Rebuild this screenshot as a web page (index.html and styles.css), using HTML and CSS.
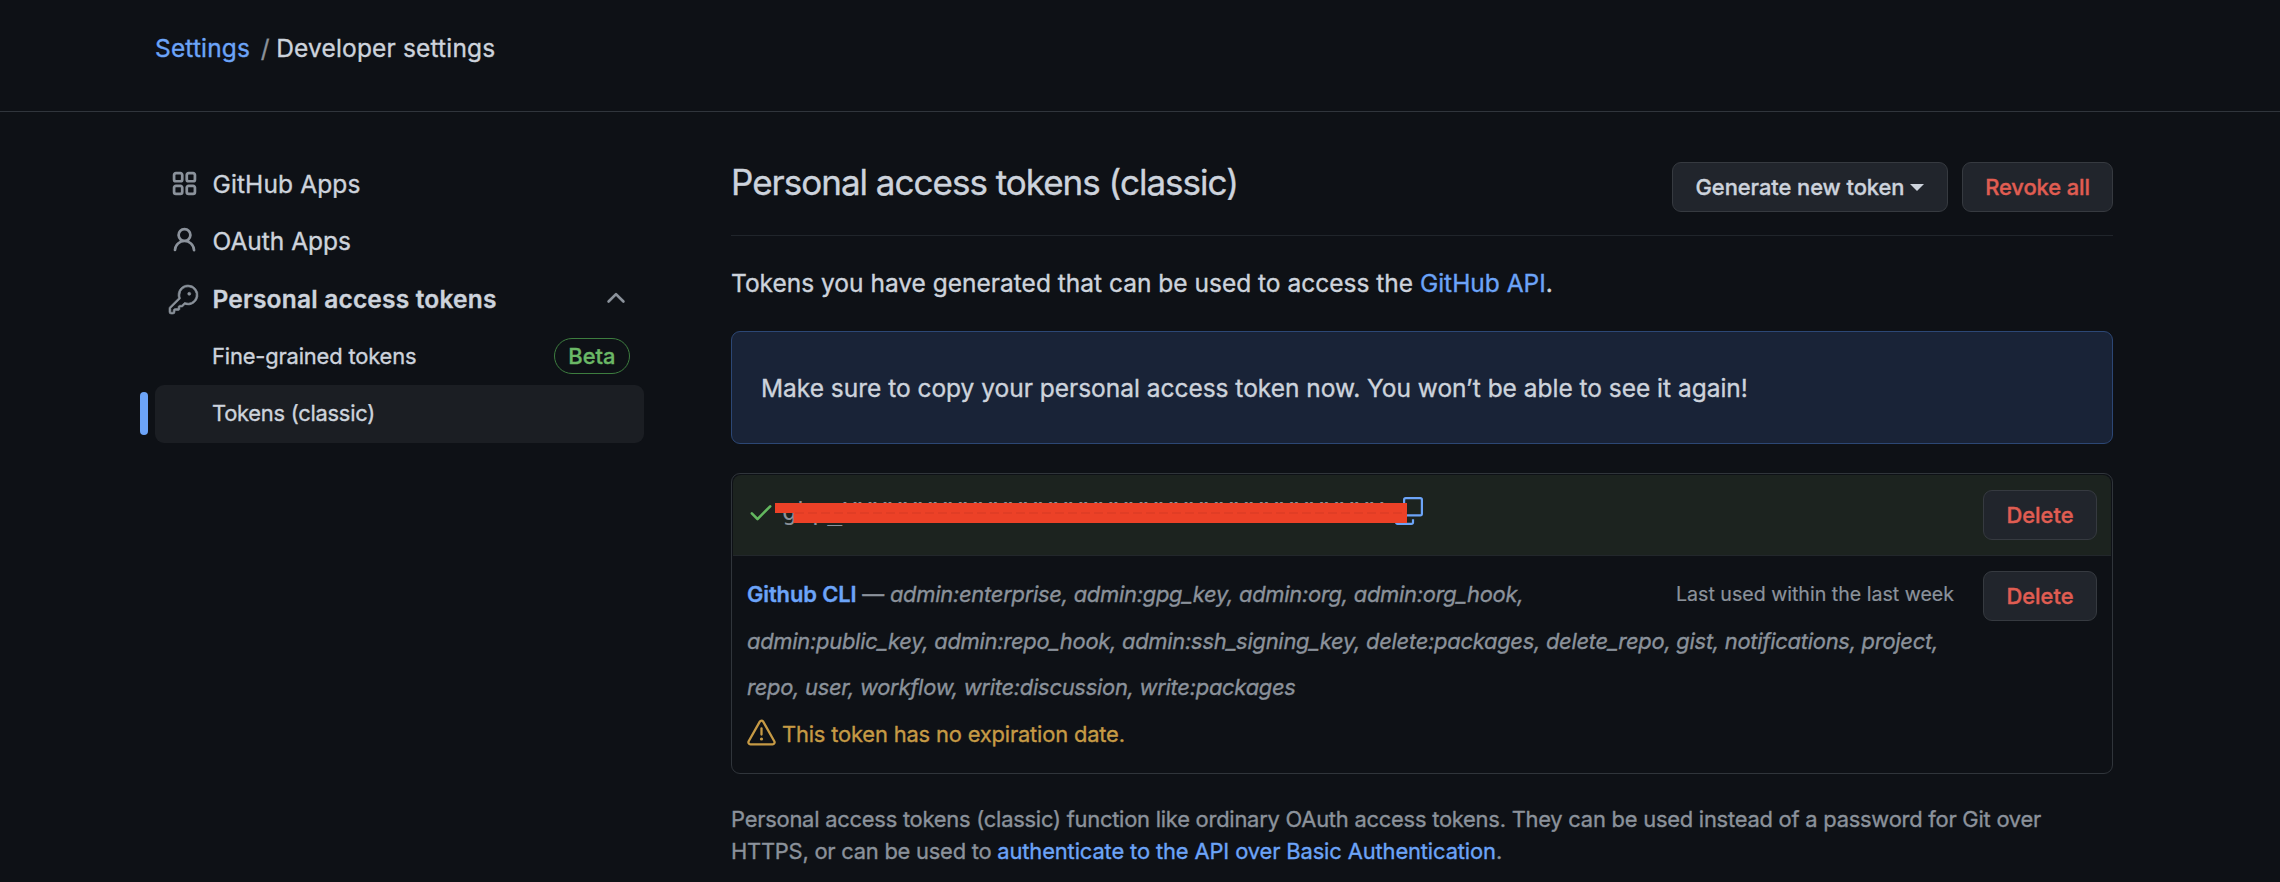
FILE: index.html
```html
<!DOCTYPE html>
<html lang="en">
<head>
<meta charset="utf-8">
<title>Personal access tokens (classic)</title>
<link rel="stylesheet" href="styles.css">
</head>
<body>
<header class="topbar">
  <nav class="crumbs"><a class="link" href="#">Settings</a><span class="slash">/</span><span class="crumb-current">Developer settings</span></nav>
</header>
<div class="layout">
  <nav class="sidebar">
    <a class="item" href="#">
      <svg class="icon" viewBox="0 0 16 16"><path d="M1.5 3.25c0-.966.784-1.75 1.75-1.75h2.5c.966 0 1.75.784 1.75 1.75v2.5A1.75 1.75 0 0 1 5.75 7.5h-2.5A1.75 1.75 0 0 1 1.5 5.75ZM3.25 3a.25.25 0 0 0-.25.25v2.5c0 .138.112.25.25.25h2.5A.25.25 0 0 0 6 5.75v-2.5A.25.25 0 0 0 5.75 3ZM1.5 10.25c0-.966.784-1.75 1.75-1.75h2.5c.966 0 1.75.784 1.75 1.75v2.5a1.75 1.75 0 0 1-1.75 1.75h-2.5a1.75 1.75 0 0 1-1.75-1.75ZM3.25 10a.25.25 0 0 0-.25.25v2.5c0 .138.112.25.25.25h2.5a.25.25 0 0 0 .25-.25v-2.5a.25.25 0 0 0-.25-.25ZM8.5 3.25c0-.966.784-1.75 1.75-1.75h2.5c.966 0 1.75.784 1.75 1.75v2.5a1.75 1.75 0 0 1-1.75 1.75h-2.5A1.75 1.75 0 0 1 8.5 5.75ZM10.25 3a.25.25 0 0 0-.25.25v2.5c0 .138.112.25.25.25h2.5a.25.25 0 0 0 .25-.25v-2.5a.25.25 0 0 0-.25-.25ZM8.5 10.25c0-.966.784-1.75 1.75-1.75h2.5c.966 0 1.75.784 1.75 1.75v2.5a1.75 1.75 0 0 1-1.75 1.75h-2.5a1.75 1.75 0 0 1-1.75-1.75Zm1.75-.25a.25.25 0 0 0-.25.25v2.5c0 .138.112.25.25.25h2.5a.25.25 0 0 0 .25-.25v-2.5a.25.25 0 0 0-.25-.25Z"/></svg>
      <span class="t-gh">GitHub Apps</span>
    </a>
    <a class="item" href="#">
      <svg class="icon" viewBox="0 0 16 16"><path d="M10.561 8.073a6.005 6.005 0 0 1 3.432 5.142.75.75 0 1 1-1.498.07 4.5 4.5 0 0 0-8.99 0 .75.75 0 0 1-1.498-.07 6.004 6.004 0 0 1 3.431-5.142 3.999 3.999 0 1 1 5.123 0ZM10.5 5a2.5 2.5 0 1 0-5 0 2.5 2.5 0 0 0 5 0Z"/></svg>
      <span class="t-oauth">OAuth Apps</span>
    </a>
    <a class="item item-strong" href="#">
      <svg class="icon icon-key" viewBox="0 0 24 24"><path d="M16.75 8.5a1.25 1.25 0 1 0 0-2.5 1.25 1.25 0 0 0 0 2.5Z"/><path d="M15.75 0a8.25 8.25 0 1 1-2.541 16.101l-1.636 1.636a1.744 1.744 0 0 1-1.237.513H9.25a.25.25 0 0 0-.25.25v1.448a.876.876 0 0 1-.256.619l-.214.213a.75.75 0 0 1-.545.22H5.25a.25.25 0 0 0-.25.25v1A1.75 1.75 0 0 1 3.25 24h-1.5A1.75 1.75 0 0 1 0 22.25v-2.836c0-.464.185-.908.513-1.236l7.386-7.388A8.249 8.249 0 0 1 15.75 0ZM9 8.25a6.733 6.733 0 0 0 .463 2.462.75.75 0 0 1-.168.804l-7.722 7.721a.25.25 0 0 0-.073.177v2.836c0 .138.112.25.25.25h1.5a.25.25 0 0 0 .25-.25v-1c0-.966.784-1.75 1.75-1.75H7.5v-1c0-.966.784-1.75 1.75-1.75h1.086a.25.25 0 0 0 .177-.073l1.971-1.972a.75.75 0 0 1 .804-.168A6.75 6.75 0 1 0 9 8.25Z"/></svg>
      <span class="t-pat">Personal access tokens</span>
      <svg class="icon chevron" viewBox="0 0 16 16"><path d="M3.22 10.53a.749.749 0 0 1 0-1.06l4.25-4.25a.749.749 0 0 1 1.06 0l4.25 4.25a.749.749 0 1 1-1.06 1.06L8 6.811 4.28 10.53a.749.749 0 0 1-1.06 0Z"/></svg>
    </a>
    <a class="item item-sub" href="#"><span class="t-fine">Fine-grained tokens</span><span class="badge">Beta</span></a>
    <a class="item item-sub item-active" href="#"><span class="t-classic">Tokens (classic)</span></a>
  </nav>
  <main class="main">
    <div class="subhead">
      <h1 class="title">Personal access tokens (classic)</h1>
      <div class="actions">
        <button class="btn btn-generate"><span>Generate new token</span><i class="caret"></i></button>
        <button class="btn btn-danger btn-revoke"><span>Revoke all</span></button>
      </div>
    </div>
    <p class="intro">Tokens you have generated that can be used to access the <a class="link" href="#">GitHub API</a>.</p>
    <div class="flash">Make sure to copy your personal access token now. You won’t be able to see it again!</div>
    <section class="box">
      <div class="row row-new">
        <svg class="check" viewBox="0 0 16 16"><path d="M13.78 4.22a.75.75 0 0 1 0 1.06l-7.25 7.25a.75.75 0 0 1-1.06 0L2.22 9.28a.751.751 0 0 1 .018-1.042.751.751 0 0 1 1.042-.018L6 10.94l6.72-6.72a.75.75 0 0 1 1.06 0Z"/></svg>
        <div class="secret">
          <code class="token">ghp_XXXXXXXXXXXXXXXXXXXXXXXXXXXXXXXXXXXX</code>
          <svg class="copy" viewBox="0 0 28 28"><rect x="9.1" y="1.1" width="17.8" height="17.3" rx="1.6"/><path d="M5.5 9.5H2.6a1.5 1.5 0 0 0-1.5 1.5v14.4a1.5 1.5 0 0 0 1.5 1.5H16.5a1.5 1.5 0 0 0 1.5-1.5V22.3"/></svg>
          <svg class="redact" viewBox="0 0 632 20"><path d="M0 0H632V20H18.5V10H0Z"/><path class="seam" d="M20 10H632"/></svg>
        </div>
        <button class="btn btn-danger btn-delete"><span>Delete</span></button>
      </div>
      <div class="row row-token">
        <div class="details">
          <span class="last-used">Last used within the last week</span>
          <p class="scopes"><span class="line"><a class="link name" href="#">Github CLI</a> — <em>admin:enterprise, admin:gpg_key, admin:org, admin:org_hook,</em></span>
          <em class="line">admin:public_key, admin:repo_hook, admin:ssh_signing_key, delete:packages, delete_repo, gist, notifications, project,</em>
          <em class="line">repo, user, workflow, write:discussion, write:packages</em></p>
          <p class="warning"><svg class="alert" viewBox="0 0 29 27"><path d="M12.800 2.600 1.700 22.200C.900 23.700 1.800 25.300 3.400 25.300H25.600C27.200 25.300 28.100 23.700 27.300 22.200L16.200 2.600C15.400 1.200 13.600 1.200 12.800 2.600Z"/><path d="M14.500 9.500V15.500"/><circle cx="14.500" cy="20" r="1.600"/></svg><span>This token has no expiration date.</span></p>
        </div>
        <button class="btn btn-danger btn-delete"><span>Delete</span></button>
      </div>
    </section>
    <p class="note"><span class="line">Personal access tokens (classic) function like ordinary OAuth access tokens. They can be used instead of a password for Git over</span>
    <span class="line">HTTPS, or can be used to <a class="link note-link" href="#">authenticate to the API over Basic Authentication</a>.</span></p>
  </main>
</div>
</body>
</html>
```
FILE: styles.css
```css
* { box-sizing: border-box; }
body {
  margin: 0;
  height: 882px;
  overflow: hidden;
  background: #0e1116;
  color: #cdd3dc;
  font-family: Inter, "Liberation Sans", sans-serif;
  font-size: 24.5px;
  line-height: 37px;
  -webkit-text-stroke: 0.35px;
}
p, h1 { margin: 0; }
a { color: inherit; text-decoration: none; }
.link { color: #6ca4f8; }
.line { display: block; white-space: nowrap; }

.topbar { height: 112px; padding: 30px 155px 0; border-bottom: 1px solid #30353c; }
.crumbs { display: flex; letter-spacing: 0.17px; white-space: nowrap; }
.slash { margin: 0 6.5px 0 10.5px; color: #8b929b; }

.layout { display: flex; gap: 87px; padding: 43px 0 0 155px; }
.sidebar { width: 489px; flex: none; }
.item { position: relative; display: flex; align-items: center; height: 57.6px; padding: 1px 13px 0; border-radius: 9px; white-space: nowrap; }
.icon { width: 29px; height: 29px; margin: -2px 14px 0 1.5px; fill: #8b929b; flex: none; }
.icon-key { margin: 0 14.5px 0 1px; stroke: #8b929b; stroke-width: 0.5; overflow: visible; }
.item-strong { font-weight: 600; letter-spacing: 0.2px; }
.t-gh { letter-spacing: 0.12px; }
.chevron { width: 28px; height: 28px; margin: -3px 1.5px 0 auto; }
.item-sub { padding: 0 14px 1px 57px; font-size: 21.9px; }
.t-fine { letter-spacing: -0.16px; }
.t-classic { letter-spacing: -0.25px; }
.badge { margin-left: auto; height: 36px; padding: 0 13.5px; border: 1px solid #3d7d3f; border-radius: 18px; color: #6bb866; font-weight: 500; line-height: 35px; }
.item-active { background: #1b1e23; }
.item-active::before { content: ""; position: absolute; left: -15px; top: 7px; width: 8px; height: 43px; border-radius: 4px; background: #6ca4f8; }

.main { width: 1382px; flex: none; }
.subhead { display: flex; justify-content: space-between; align-items: flex-start; height: 81px; padding-top: 7px; border-bottom: 1px solid #20252b; }
.title { margin-top: -3px; font-size: 35px; font-weight: 400; line-height: 46px; letter-spacing: -1px; white-space: nowrap; }
.actions { display: flex; gap: 14px; }
.btn { display: flex; align-items: center; justify-content: center; height: 50px; padding: 0; border: 1px solid #363a40; border-radius: 9px; background: #21252c; color: #cdd3dc; font-family: inherit; font-size: 21.9px; font-weight: 500; white-space: nowrap; flex: none; }
.btn-danger { color: #e05d52; }
.btn-generate { width: 276px; gap: 6px; letter-spacing: -0.05px; }
.btn-revoke { width: 151px; letter-spacing: -0.1px; }
.btn-delete { width: 114px; }
.caret { border: 7px solid transparent; border-top: 7.5px solid #cdd3dc; border-bottom: 0; }
.intro { margin-top: 29px; white-space: nowrap; }
.flash { display: flex; align-items: center; height: 113px; margin-top: 29px; padding: 1px 29px 0; border: 1px solid #2c4775; border-radius: 9px; background: #192337; letter-spacing: -0.02px; white-space: nowrap; }

.box { height: 301px; margin-top: 29px; padding: 1px; border: 1px solid #30353b; border-radius: 9px; }
.row { display: flex; padding: 15px 14px 0; }
.row-new { height: 81px; background: #1c231f; border-bottom: 1px solid #22272b; border-radius: 8px 8px 0 0; }
.check { width: 28px; height: 28px; margin-top: 8px; fill: #63b85f; flex: none; }
.secret { position: relative; display: flex; flex: 1; align-items: flex-start; padding-left: 7px; }
.token { display: block; width: 613px; margin-top: 5px; overflow: hidden; color: #8b929b; font: 25px/34px "DejaVu Sans Mono", monospace; -webkit-text-stroke: 0; }
.copy { width: 28px; height: 28px; margin-top: 7px; fill: none; stroke: #6ca4f8; stroke-width: 2.2; }
.redact { position: absolute; left: 0; top: 13px; width: 632px; height: 20px; fill: #ec4127; }
.seam { stroke: #d63a25; stroke-width: 1; stroke-dasharray: 9 4; }
.row-token { color: #8b929b; font-size: 21.9px; line-height: 46.7px; }
.details { position: relative; flex: 1; }
.scopes { letter-spacing: -0.25px; }
.last-used { position: absolute; right: 29px; top: 0; font-size: 19.6px; -webkit-text-stroke: 0.2px; white-space: nowrap; }
.name { font-weight: 600; letter-spacing: -0.1px; }
.warning { display: flex; align-items: center; gap: 6px; color: #c69a45; letter-spacing: -0.17px; white-space: nowrap; }
.alert { width: 29px; height: 27px; margin-top: -4px; fill: none; stroke: currentColor; stroke-width: 2.3; stroke-linecap: round; }
.alert circle { fill: currentColor; stroke: none; }
.note { margin-top: 29px; color: #8b929b; font-size: 21.9px; line-height: 32.4px; letter-spacing: -0.23px; }
.note-link { letter-spacing: -0.12px; }
```
